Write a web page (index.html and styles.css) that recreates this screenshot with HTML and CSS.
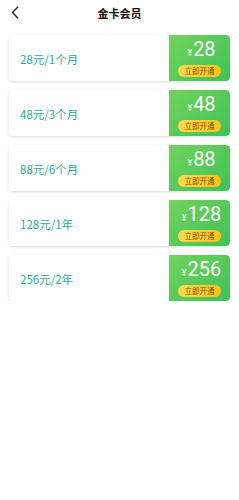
FILE: index.html
```html
<!DOCTYPE html>
<html lang="zh">
<head>
<meta charset="utf-8">
<title>金卡会员</title>
<link rel="stylesheet" href="styles.css">
</head>
<body>
<div class="header">
    <div class="back">
        <svg width="9" height="13" viewBox="0 0 9 13"><path d="M7 0.8 L1.6 6.5 L7 12.2" fill="none" stroke="#222" stroke-width="1.4"/></svg>
    </div>
    <div class="title">金卡会员</div>
</div>
<div class="list">
    <div class="card">
        <div class="name">28元/1个月</div>
        <div class="buy">
            <div class="price"><span class="yen">¥</span>28</div>
            <div class="btn">立即开通</div>
        </div>
    </div>
    <div class="card">
        <div class="name">48元/3个月</div>
        <div class="buy">
            <div class="price"><span class="yen">¥</span>48</div>
            <div class="btn">立即开通</div>
        </div>
    </div>
    <div class="card">
        <div class="name">88元/6个月</div>
        <div class="buy">
            <div class="price"><span class="yen">¥</span>88</div>
            <div class="btn">立即开通</div>
        </div>
    </div>
    <div class="card">
        <div class="name">128元/1年</div>
        <div class="buy">
            <div class="price"><span class="yen">¥</span>128</div>
            <div class="btn">立即开通</div>
        </div>
    </div>
    <div class="card">
        <div class="name">256元/2年</div>
        <div class="buy">
            <div class="price"><span class="yen">¥</span>256</div>
            <div class="btn">立即开通</div>
        </div>
    </div>
</div>
</body>
</html>
```
FILE: styles.css
```css
body {
    margin: 0;
    background: #fff;
    font-family: "Noto Sans CJK SC", "Noto Sans", sans-serif;
    width: 239px;
}
.header {
    height: 26px;
    display: flex;
    align-items: center;
    justify-content: center;
    position: relative;
}
.back {
    position: absolute;
    left: 11px;
    top: 6px;
    line-height: 0;
}
.title {
    font-size: 11px;
    line-height: 14px;
    font-weight: bold;
    color: #111;
}
.list {
    padding: 9px 9px 0 9px;
    display: flex;
    flex-direction: column;
    gap: 9px;
}
.card {
    height: 46px;
    display: flex;
    border-radius: 4px;
    background: #fff;
    box-shadow: 0 1px 3px rgba(0, 0, 0, 0.15);
    overflow: hidden;
}
.name {
    flex: 1;
    display: flex;
    align-items: center;
    padding-left: 11px;
    padding-top: 1px;
    font-size: 11.5px;
    color: #2aa89c;
}
.buy {
    width: 61px;
    background: linear-gradient(135deg, #72d35b, #3fc25a);
    display: flex;
    flex-direction: column;
    align-items: center;
    border-radius: 0 4px 4px 0;
}
.price {
    color: #fff;
    font-family: "Roboto", "Noto Sans", sans-serif;
    font-size: 20px;
    line-height: 20px;
    margin-top: 4px;
    margin-left: 4px;
}
.yen {
    font-size: 9px;
    margin-right: 1px;
}
.btn {
    margin-top: 2px;
    width: 43px;
    height: 12px;
    border-radius: 6px;
    background: linear-gradient(90deg, #f7dc4c, #fcc21c);
    color: #7a4e0c;
    font-size: 7.5px;
    line-height: 12px;
    text-align: center;
}
```
